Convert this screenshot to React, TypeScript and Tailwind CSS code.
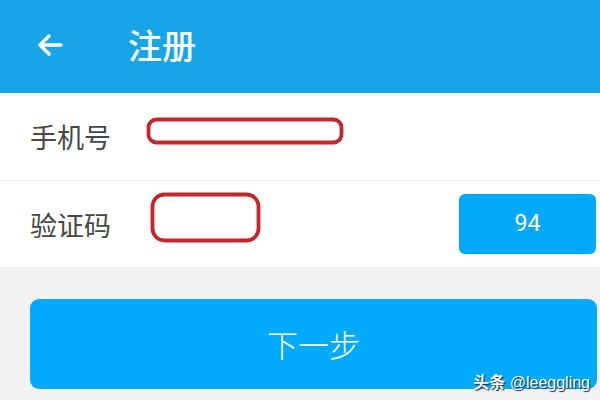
import React from "react";

const cjk = { fontFamily: '"Noto Sans CJK SC", "Noto Sans", sans-serif' };

export default function App() {
  return (
    <div className="relative w-[600px] h-[400px] overflow-hidden bg-[#f2f2f2] flex flex-col" style={cjk}>
      {/* header */}
      <div className="h-[93px] bg-[#17a5e7] flex items-center shrink-0">
        <svg width="28" height="24" viewBox="0 0 28 24" className="ml-[36px] mt-[-4px]">
          <path d="M25 12H4M13 3L4 12L13 21" fill="none" stroke="white" strokeWidth="3.4" strokeLinecap="round" strokeLinejoin="round" />
        </svg>
        <span className="ml-[64px] text-white text-[34px] font-medium leading-none mt-[-4px]">注册</span>
      </div>
      {/* row 1 */}
      <div className="h-[88px] bg-white flex items-center shrink-0 border-b border-[#ececec]">
        <span className="ml-[30px] text-[27px] text-[#474747] leading-none">手机号</span>
        <svg width="198" height="29" viewBox="0 0 198 29" className="ml-[35px] mt-[-10px]">
          <rect x="2.5" y="2.5" width="193" height="23" rx="8" fill="none" stroke="#c4262e" strokeWidth="3.8" />
        </svg>
      </div>
      {/* row 2 */}
      <div className="h-[86px] bg-white flex items-center shrink-0">
        <span className="ml-[30px] text-[27px] text-[#474747] leading-none">验证码</span>
        <svg width="112" height="52" viewBox="0 0 112 52" className="ml-[39px] mt-[-12px]">
          <rect x="2.5" y="2.5" width="106" height="46" rx="12" fill="none" stroke="#c4262e" strokeWidth="3.8" />
        </svg>
        <div className="ml-auto mr-[4px] w-[137px] h-[60px] rounded-[6px] bg-[#04a9f8] flex items-center justify-center text-white text-[23px] font-normal" style={{ fontFamily: '"Roboto", sans-serif' }}>
          94
        </div>
      </div>
      {/* button */}
      <div className="mt-[32px] ml-[30px] mr-[3px] h-[90px] rounded-[9px] bg-[#02aafb] flex items-center justify-center text-white text-[31px] font-light">
        下一步
      </div>
      <div className="absolute right-[10px] bottom-[9px] text-white text-[16px] font-bold leading-none [text-shadow:1px_1px_1px_#222]" style={{ fontFamily: '"Liberation Sans", "Noto Sans CJK SC", sans-serif' }}>
        头条 <span className="font-normal">@leeggling</span>
      </div>
    </div>
  );
}
